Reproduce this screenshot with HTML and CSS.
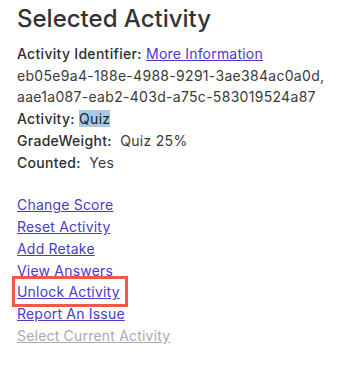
FILE: index.html
```html
<!DOCTYPE html>
<html>
<head>
<meta charset="utf-8">
<link rel="stylesheet" href="styles.css">
</head>
<body>
<div class="panel">
  <h1 class="title">Selected Activity</h1>
  <div class="details">
    <div class="row"><span class="label">Activity Identifier:</span> <a class="link" href="#">More Information</a></div>
    <div class="row value">eb05e9a4-188e-4988-9291-3ae384ac0a0d,</div>
    <div class="row value">aae1a087-eab2-403d-a75c-583019524a87</div>
    <div class="row"><span class="label">Activity:</span> <span class="selected">Quiz</span></div>
    <div class="row"><span class="label">GradeWeight:</span>&nbsp; <span class="value">Quiz 25%</span></div>
    <div class="row"><span class="label">Counted:</span>&nbsp; <span class="value">Yes</span></div>
  </div>
  <ul class="actions">
    <li><a class="link" href="#">Change Score</a></li>
    <li><a class="link" href="#">Reset Activity</a></li>
    <li><a class="link" href="#">Add Retake</a></li>
    <li><a class="link" href="#">View Answers</a></li>
    <li><a class="link highlight" href="#">Unlock Activity</a></li>
    <li><a class="link" href="#">Report An Issue</a></li>
    <li><a class="link disabled" href="#">Select Current Activity</a></li>
  </ul>
</div>
</body>
</html>
```
FILE: styles.css
```css
html, body {
  margin: 0;
  padding: 0;
  background: #ffffff;
}
body {
  font-family: Inter, "Noto Sans", sans-serif;
  font-size: 14px;
  color: #333333;
  letter-spacing: 0.3px;
}
.panel {
  padding: 4px 17px 0 17px;
}
.title {
  margin: 0;
  font-size: 24px;
  line-height: 30px;
  font-weight: 500;
  letter-spacing: 0;
  color: #333333;
}
.details {
  margin-top: 9px;
}
.row {
  line-height: 21.7px;
  white-space: nowrap;
}
.label {
  font-weight: 500;
  color: #2e2e2e;
}
.value {
  color: #3a3a3a;
}
.selected {
  background: #a8c8e8;
  color: #222;
}
.link {
  color: #4a3acb;
  text-decoration: underline;
  letter-spacing: 0.2px;
}
.actions {
  list-style: none;
  margin: 21px 0 0 0;
  padding: 0;
}
.actions li {
  line-height: 21.8px;
  height: 21.8px;
}
.highlight {
  position: relative;
  display: inline-block;
  line-height: 22px;
}
.highlight::after {
  content: "";
  position: absolute;
  top: -5px;
  bottom: -4px;
  left: -5px;
  right: -8px;
  border: 3px solid #f0584a;
}
.disabled {
  color: #a9a9b4;
}
```
